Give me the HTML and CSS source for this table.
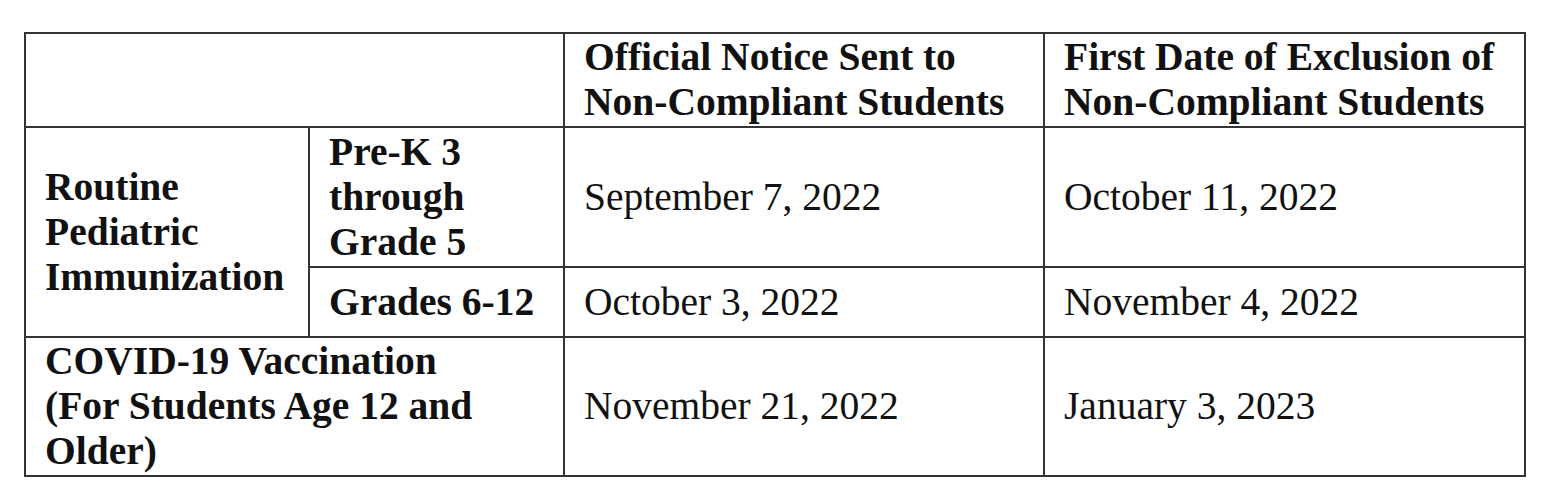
FILE: index.html
```html
<!DOCTYPE html>
<html lang="en">
<head>
<meta charset="utf-8">
<title>Immunization Dates</title>
<link rel="stylesheet" href="styles.css">
</head>
<body>
<table class="sched">
  <colgroup>
    <col class="c1"><col class="c2"><col class="c3"><col class="c4">
  </colgroup>
  <tr class="r-head">
    <th colspan="2"></th>
    <th>Official Notice Sent to<br>Non-Compliant Students</th>
    <th>First Date of Exclusion of<br>Non-Compliant Students</th>
  </tr>
  <tr class="r-prek">
    <th rowspan="2">Routine<br>Pediatric<br>Immunization</th>
    <th>Pre-K 3<br>through<br>Grade 5</th>
    <td>September 7, 2022</td>
    <td>October 11, 2022</td>
  </tr>
  <tr class="r-grades">
    <th>Grades 6-12</th>
    <td>October 3, 2022</td>
    <td>November 4, 2022</td>
  </tr>
  <tr class="r-covid">
    <th colspan="2">COVID-19 Vaccination<br>(For Students Age 12 and<br>Older)</th>
    <td>November 21, 2022</td>
    <td>January 3, 2023</td>
  </tr>
</table>
</body>
</html>
```

FILE: styles.css
```css
html, body {
  margin: 0;
  padding: 0;
  background: #ffffff;
}

body {
  font-family: "Liberation Serif", "Times New Roman", serif;
  color: #111111;
  padding: 32px 0 0 24px;
}

.sched {
  border-collapse: collapse;
  table-layout: fixed;
  width: 1500px;
  font-size: 39.5px;
  line-height: 45px;
}

.c1 { width: 284px; }
.c2 { width: 255px; }
.c3 { width: 480px; }
.c4 { width: 481px; }

.sched th,
.sched td {
  border: 2px solid #333333;
  padding: 0 8px 0 19px;
  text-align: left;
  vertical-align: middle;
  white-space: nowrap;
}

.sched th {
  font-weight: bold;
}

.sched td {
  font-weight: normal;
}

.r-head th { height: 92px; }
.r-prek th, .r-prek td { height: 138px; }
.r-grades th, .r-grades td { height: 68px; }
.r-covid th, .r-covid td { height: 137px; }
```
